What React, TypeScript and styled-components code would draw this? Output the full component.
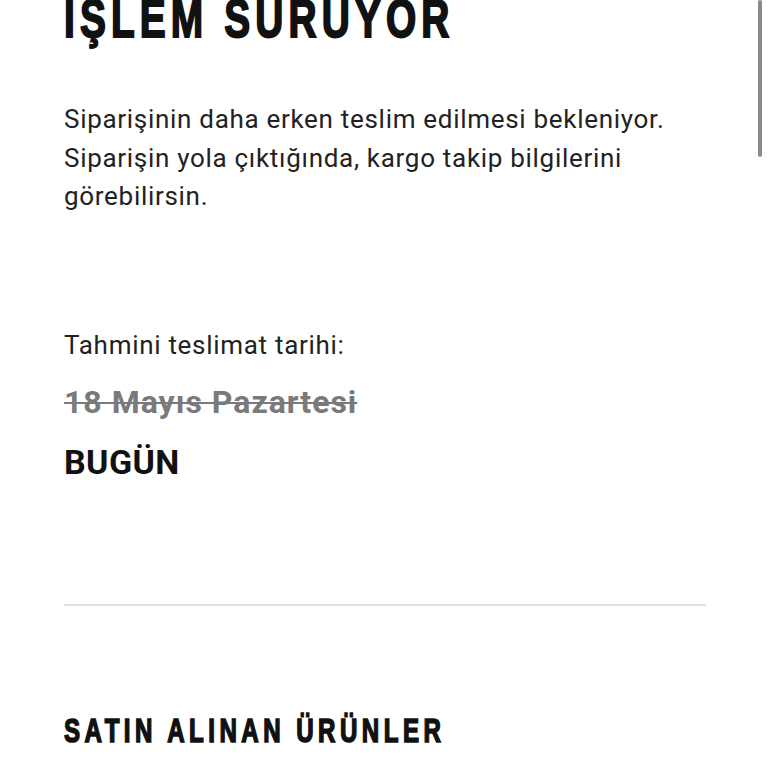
import React from "react";
import styled, { createGlobalStyle } from "styled-components";

const Global = createGlobalStyle`
  html, body { margin: 0; padding: 0; background: #ffffff; }
  body { overflow: hidden; }
  #root { min-height: 768px; }
`;

const Screen = styled.div`
  position: relative;
  width: 768px;
  height: 768px;
  overflow: hidden;
  background: #ffffff;
`;

const Page = styled.main`
  display: flex;
  flex-direction: column;
  padding: 0 62px 0 64px;
  margin-top: -9px;
  color: #111111;
`;

const Condensed = styled.span<{ $stroke: number }>`
  display: inline-block;
  white-space: nowrap;
  transform-origin: left center;
  transform: scaleX(0.72);
  -webkit-text-stroke: ${(p) => p.$stroke}px #111111;
`;

const Title = styled.h1<{ $size: number; $spacing: number }>`
  margin: 0;
  font-family: "Liberation Sans", Arial, sans-serif;
  font-weight: 700;
  font-size: ${(p) => p.$size}px;
  line-height: 1;
  letter-spacing: ${(p) => p.$spacing}px;
  color: #111111;
  white-space: nowrap;
`;

const Paragraph = styled.p<{ $gap: number }>`
  margin: ${(p) => p.$gap}px 0 0;
  font-family: Roboto, "Liberation Sans", sans-serif;
  font-size: 26px;
  line-height: 38.5px;
  letter-spacing: 0.7px;
  color: #222222;
`;

const DateLine = styled.div<{ $gap: number; $muted?: boolean; $size: number; $spacing: number }>`
  margin-top: ${(p) => p.$gap}px;
  font-family: Roboto, "Liberation Sans", sans-serif;
  font-weight: 700;
  font-size: ${(p) => p.$size}px;
  line-height: 38px;
  letter-spacing: ${(p) => p.$spacing}px;
  color: ${(p) => (p.$muted ? "#7a7a7a" : "#111111")};
  text-decoration: ${(p) => (p.$muted ? "line-through" : "none")};
  text-decoration-thickness: 2px;
`;

const Divider = styled.hr`
  margin: 123px 0 0;
  border: none;
  height: 2px;
  background: #e0e0e0;
`;

const SectionSpacer = styled.div`
  height: 108px;
`;

const ScrollThumb = styled.div`
  position: absolute;
  top: 0;
  right: 6px;
  width: 4px;
  height: 157px;
  border-radius: 2px;
  background: #8a8a8a;
`;

export default function App() {
  return (
    <>
      <Global />
      <Screen>
        <Page>
          <Title $size={54} $spacing={7.1}>
            <Condensed $stroke={2}>İŞLEM SÜRÜYOR</Condensed>
          </Title>
          <Paragraph $gap={55}>
            Siparişinin daha erken teslim edilmesi bekleniyor.
            <br />
            Siparişin yola çıktığında, kargo takip bilgilerini
            <br />
            görebilirsin.
          </Paragraph>
          <Paragraph $gap={110}>Tahmini teslimat tarihi:</Paragraph>
          <DateLine $gap={19} $muted $size={32} $spacing={1}>
            18 Mayıs Pazartesi
          </DateLine>
          <DateLine $gap={22} $size={34} $spacing={0.4}>
            BUGÜN
          </DateLine>
          <Divider />
          <SectionSpacer />
          <Title as="h2" $size={33.5} $spacing={6.2}>
            <Condensed $stroke={1.6}>SATIN ALINAN ÜRÜNLER</Condensed>
          </Title>
        </Page>
        <ScrollThumb />
      </Screen>
    </>
  );
}
